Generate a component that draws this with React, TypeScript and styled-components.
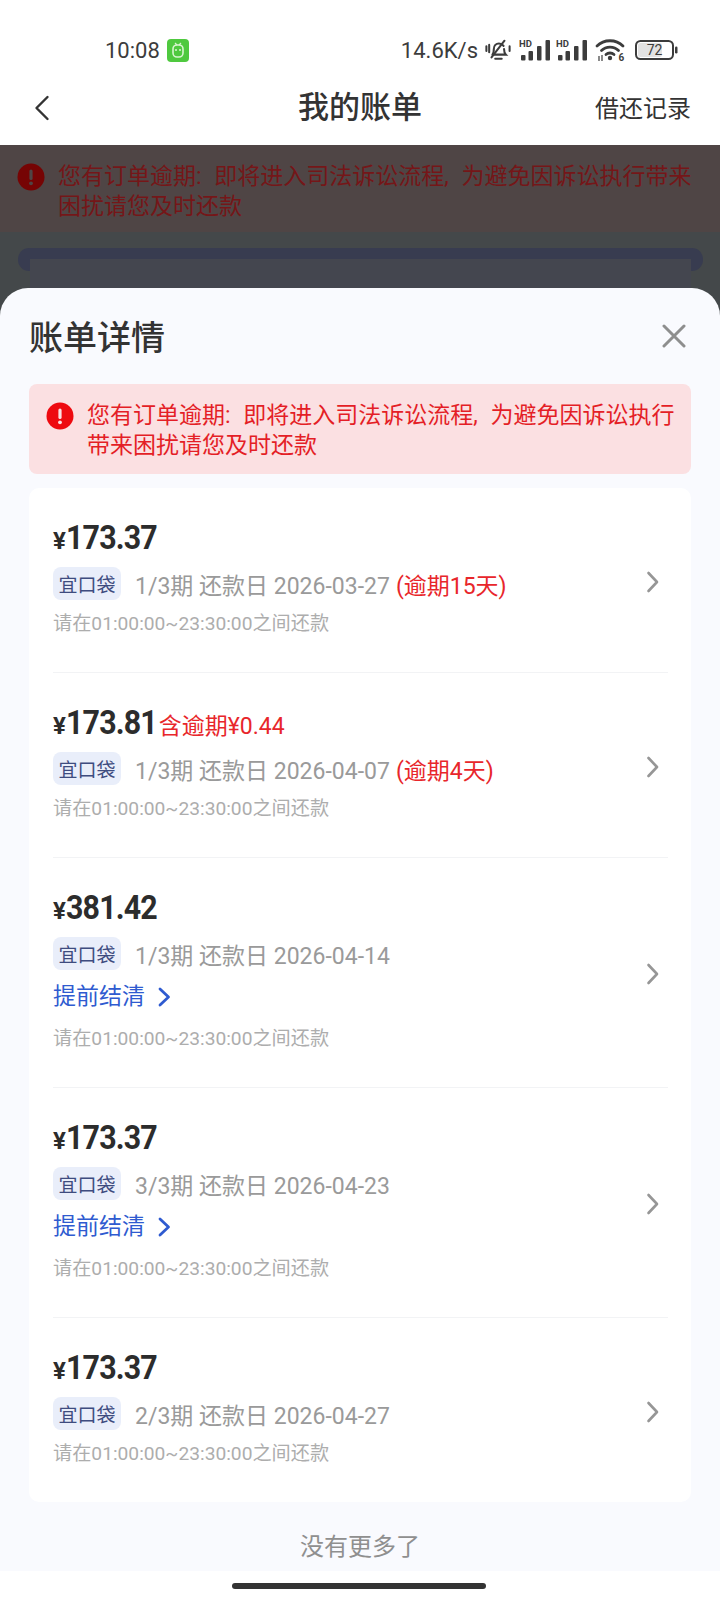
import React from "react";
import styled, { createGlobalStyle } from "styled-components";

const Global = createGlobalStyle`
  html, body { margin: 0; padding: 0; background: #fff; }
  body { width: 720px; height: 1600px; overflow: hidden; font-family: Roboto, "Noto Sans CJK SC", sans-serif; }
  * { box-sizing: border-box; }
`;

const Page = styled.div`
  width: 720px;
  height: 1600px;
  display: flex;
  flex-direction: column;
  background: #fff;
`;

const StatusBar = styled.div`
  height: 80px;
  padding: 20px 42px 0 105px;
  display: flex;
  align-items: center;
  justify-content: space-between;
  color: #3c3c3c;
  font-size: 22px;
`;
const StatusGroup = styled.div`
  display: flex;
  align-items: center;
`;
const Time = styled.span`
  margin-right: 7px;
`;
const Speed = styled.span`
  margin-right: 7px;
`;
const StatusIcon = styled.svg<{ $gap?: number }>`
  display: block;
  flex: none;
  margin-right: ${(p) => p.$gap ?? 0}px;
`;

const NavBar = styled.div`
  height: 65px;
  padding: 0 29px 10px 34px;
  display: flex;
  align-items: center;
  justify-content: space-between;
  position: relative;
  color: #333;
`;
const NavTitle = styled.div`
  position: absolute;
  left: 0;
  right: 0;
  text-align: center;
  font-size: 31px;
  font-weight: 500;
  padding-bottom: 6px;
`;
const NavAction = styled.div`
  font-size: 24px;
  margin-bottom: 2px;
`;

const DimmedArea = styled.div`
  background: #44484a;
`;
const Backdrop = styled.div`
  height: 143px;
  overflow: hidden;
`;
const BackdropNotice = styled.div`
  height: 87px;
  padding: 17px 24px 0 17px;
  display: flex;
  background: #4f4545;
  color: #751618;
  font-size: 23px;
  line-height: 30px;
  gap: 13px;
  word-spacing: 7px;
`;
const BackdropBar = styled.div`
  margin: 16px 17px 0 18px;
  height: 23px;
  padding: 11px 12px 0;
  background: #383c50;
  border-radius: 11px;
`;
const BackdropPanel = styled.div`
  height: 40px;
  background: #44464f;
`;

const Sheet = styled.div`
  height: 1283px;
  background: #f9fafe;
  border-radius: 28px 28px 0 0;
  padding: 0 29px;
  display: flex;
  flex-direction: column;
`;
const SheetHeader = styled.div`
  height: 96px;
  padding: 0 5px 0 0;
  display: flex;
  align-items: center;
  justify-content: space-between;
  color: #333;
`;
const SheetTitle = styled.div`
  font-size: 34px;
  font-weight: 500;
  line-height: 46px;
  margin-top: 4px;
`;
const Notice = styled.div`
  height: 90px;
  padding: 17px 12px 0 17px;
  display: flex;
  gap: 13px;
  background: #fbe0e2;
  border-radius: 8px;
  color: #e41e26;
  font-size: 23px;
  line-height: 30px;
  word-spacing: 7px;
`;
const NoticeIcon = styled.svg`
  flex: none;
  display: block;
  margin-top: 1px;
`;
const Card = styled.div`
  margin-top: 14px;
  height: 1014px;
  background: #fff;
  border-radius: 10px;
  padding: 0 23px 0 24px;
`;
const Row = styled.div`
  display: flex;
  align-items: center;
  justify-content: space-between;
  padding: 30px 8px 35px 0;
  border-bottom: 1px solid #f2f3f5;
  &:last-child { border-bottom: none; }
`;
const RowBody = styled.div`
  display: flex;
  flex-direction: column;
`;
const AmountLine = styled.div`
  display: flex;
  align-items: baseline;
  height: 40px;
  line-height: 40px;
`;
const Yen = styled.span`
  font-size: 24px;
  font-weight: 700;
  color: #2c2c2c;
`;
const Amount = styled.span`
  display: inline-block;
  font-size: 33px;
  font-weight: 700;
  color: #2c2c2c;
  letter-spacing: -0.9px;
  transform: scaleX(0.92);
  transform-origin: left center;
  margin-right: -8px;
`;
const LateFee = styled.span`
  margin-left: 2px;
  font-size: 23px;
  color: #e8262b;
`;
const InfoLine = styled.div`
  margin-top: 9px;
  display: flex;
  align-items: center;
  height: 33px;
  font-size: 23px;
  color: #9a9a9a;
  white-space: pre;
`;
const Tag = styled.span`
  width: 68px;
  height: 33px;
  margin-right: 14px;
  border-radius: 8px;
  background: #e9eefa;
  color: #3e4c7f;
  font-size: 19px;
  display: flex;
  align-items: center;
  justify-content: center;
`;
const Overdue = styled.span`
  margin-left: 6px;
  color: #e8262b;
`;
const SettleLink = styled.div`
  margin: 12px 0 3px;
  height: 30px;
  line-height: 30px;
  display: flex;
  align-items: center;
  gap: 13px;
  color: #2f5bd0;
  font-size: 23px;
`;
const Hint = styled.div`
  margin-top: 11px;
  height: 26px;
  line-height: 26px;
  font-size: 19.2px;
  color: #adadad;
`;
const ChevronIcon = styled.svg`
  flex: none;
  display: block;
  margin-top: 8px;
`;
const Footer = styled.div`
  height: 69px;
  padding-top: 16px;
  display: flex;
  align-items: center;
  justify-content: center;
  font-size: 24px;
  color: #8f8f8f;
`;
const HomeZone = styled.div`
  flex: 1;
  display: flex;
  justify-content: center;
  padding-top: 12px;
`;
const HomeBar = styled.div`
  width: 254px;
  height: 6px;
  border-radius: 3px;
  background: #333;
  margin-right: 2px;
`;

const NOTICE = "您有订单逾期: 即将进入司法诉讼流程, 为避免因诉讼执行带来困扰请您及时还款";

const Signal = ({ gap }: { gap: number }) => (
  <StatusIcon $gap={gap} width="32" height="22" viewBox="0 0 32 22">
    <text x="0" y="7.5" fontSize="9.500" fontWeight="700" fontFamily="Roboto, sans-serif" fill="#3c3c3c">HD</text>
    <g fill="#3c3c3c">
      <rect x="2" y="16" width="4.500" height="5.500" rx="1" />
      <rect x="9.500" y="12" width="4.500" height="9.500" rx="1" />
      <rect x="18" y="7" width="4.500" height="14.500" rx="1" />
      <rect x="26.500" y="1" width="4.500" height="20.500" rx="1" />
    </g>
  </StatusIcon>
);

const ErrorDot = ({ fill, mark }: { fill: string; mark: string }) => (
  <NoticeIcon width="28" height="28" viewBox="0 0 28 28">
    <circle cx="14" cy="14" r="13.5" fill={fill} />
    <rect x="12.4" y="6.5" width="3.2" height="10.5" rx="1.6" fill={mark} />
    <circle cx="14" cy="20.3" r="1.9" fill={mark} />
  </NoticeIcon>
);

const Chevron = () => (
  <ChevronIcon width="14" height="22" viewBox="0 0 14 22">
    <path d="M2.500 2l8.500 9-8.500 9" fill="none" stroke="#969696" strokeWidth="2.600" strokeLinecap="round" strokeLinejoin="round" />
  </ChevronIcon>
);

type Bill = { yen: string; fee?: string; period: string; date: string; late?: string; settle?: boolean };
const bills: Bill[] = [
  { yen: "173.37", period: "1/3期", date: "2026-03-27", late: "(逾期15天)" },
  { yen: "173.81", fee: "含逾期¥0.44", period: "1/3期", date: "2026-04-07", late: "(逾期4天)" },
  { yen: "381.42", period: "1/3期", date: "2026-04-14", settle: true },
  { yen: "173.37", period: "3/3期", date: "2026-04-23", settle: true },
  { yen: "173.37", period: "2/3期", date: "2026-04-27" },
];

export default function App() {
  return (
    <Page>
      <Global />
      <StatusBar>
        <StatusGroup>
          <Time>10:08</Time>
          <StatusIcon width="22" height="23" viewBox="0 0 22 23">
            <rect width="22" height="23" rx="4" fill="#4fc93f" />
            <rect x="6" y="6" width="10" height="12" rx="4" fill="none" stroke="#d9f5d0" strokeWidth="1.6" />
            <circle cx="9" cy="11" r="1" fill="#d9f5d0" />
            <circle cx="13" cy="11" r="1" fill="#d9f5d0" />
            <path d="M8 4l2 2M14 4l-2 2" stroke="#d9f5d0" strokeWidth="1.2" />
          </StatusIcon>
        </StatusGroup>
        <StatusGroup>
          <Speed>14.6K/s</Speed>
          <StatusIcon $gap={8} width="26" height="24" viewBox="0 0 28 24">
            <g fill="none" stroke="#3c3c3c" strokeWidth="2.200" strokeLinecap="round">
              <path d="M8 17c1.500-1.500 1.500-3 1.500-6 0-3.500 2.500-6 5.500-6 2.500 0 4 1 5 2.500M20.500 11c0 3 .5 4.500 2 6H8" />
              <path d="M11 21.500h7M7 20L21 2" />
              <path d="M1.500 8v5M4.500 6.500v8M26.500 8v5" />
            </g>
          </StatusIcon>
          <Signal gap={5} />
          <Signal gap={7} />
          <StatusIcon $gap={10} width="30" height="24" viewBox="0 0 30 24">
            <g fill="none" stroke="#3c3c3c" strokeWidth="2.800" strokeLinecap="round">
              <path d="M2 8c7-7 19-7 26 0" />
              <path d="M6.500 12.500c4.500-4.500 12.500-4.500 17 0" />
              <path d="M11 16.500c2.200-2 5.800-2 8 0" />
            </g>
            <circle cx="15" cy="20" r="2.200" fill="#3c3c3c" />
            <path d="M4 18v5M7 17v6" stroke="#3c3c3c" strokeWidth="1.200" />
            <text x="23.500" y="23" fontSize="10" fontWeight="700" fontFamily="Roboto, sans-serif" fill="#3c3c3c">6</text>
          </StatusIcon>
          <StatusIcon width="43" height="20" viewBox="0 0 43 20">
            <rect x="1" y="1" width="37" height="18" rx="4.500" fill="#fff" stroke="#3c3c3c" strokeWidth="2" />
            <rect x="3" y="3" width="24" height="14" rx="2.500" fill="#e2e2e2" />
            <rect x="40" y="6.500" width="2.500" height="7" rx="1.200" fill="#3c3c3c" />
            <text x="19.500" y="15" fontSize="14" textAnchor="middle" fontFamily="Roboto, sans-serif" fill="#3c3c3c">72</text>
          </StatusIcon>
        </StatusGroup>
      </StatusBar>
      <NavBar>
        <svg width="16" height="26" viewBox="0 0 16 26">
          <path d="M13.500 2L2.500 13l11 11" fill="none" stroke="#333" strokeWidth="2.400" strokeLinecap="round" strokeLinejoin="round" />
        </svg>
        <NavTitle>我的账单</NavTitle>
        <NavAction>借还记录</NavAction>
      </NavBar>
      <DimmedArea>
        <Backdrop>
          <BackdropNotice>
            <ErrorDot fill="#760404" mark="#4f4545" />
            <span>{NOTICE}</span>
          </BackdropNotice>
          <BackdropBar>
            <BackdropPanel />
          </BackdropBar>
        </Backdrop>
        <Sheet>
          <SheetHeader>
            <SheetTitle>账单详情</SheetTitle>
            <svg width="24" height="24" viewBox="0 0 24 24">
              <path d="M2 2l20 20M22 2L2 22" stroke="#8e8e8e" strokeWidth="3" strokeLinecap="round" />
            </svg>
          </SheetHeader>
          <Notice>
            <ErrorDot fill="#ee0a10" mark="#fbe0e2" />
            <span>{NOTICE}</span>
          </Notice>
          <Card>
            {bills.map((b, i) => (
              <Row key={i}>
                <RowBody>
                  <AmountLine>
                    <Yen>¥</Yen>
                    <Amount>{b.yen}</Amount>
                    {b.fee && <LateFee>{b.fee}</LateFee>}
                  </AmountLine>
                  <InfoLine>
                    <Tag>宜口袋</Tag>
                    {b.period} 还款日 {b.date}
                    {b.late && <Overdue>{b.late}</Overdue>}
                  </InfoLine>
                  {b.settle && (
                    <SettleLink>
                      提前结清
                      <svg width="13" height="20" viewBox="0 0 13 20">
                        <path d="M2 2l8.500 8-8.500 8" fill="none" stroke="#2f5bd0" strokeWidth="2.800" strokeLinecap="round" strokeLinejoin="round" />
                      </svg>
                    </SettleLink>
                  )}
                  <Hint>请在01:00:00~23:30:00之间还款</Hint>
                </RowBody>
                <Chevron />
              </Row>
            ))}
          </Card>
          <Footer>没有更多了</Footer>
        </Sheet>
      </DimmedArea>
      <HomeZone>
        <HomeBar />
      </HomeZone>
    </Page>
  );
}
